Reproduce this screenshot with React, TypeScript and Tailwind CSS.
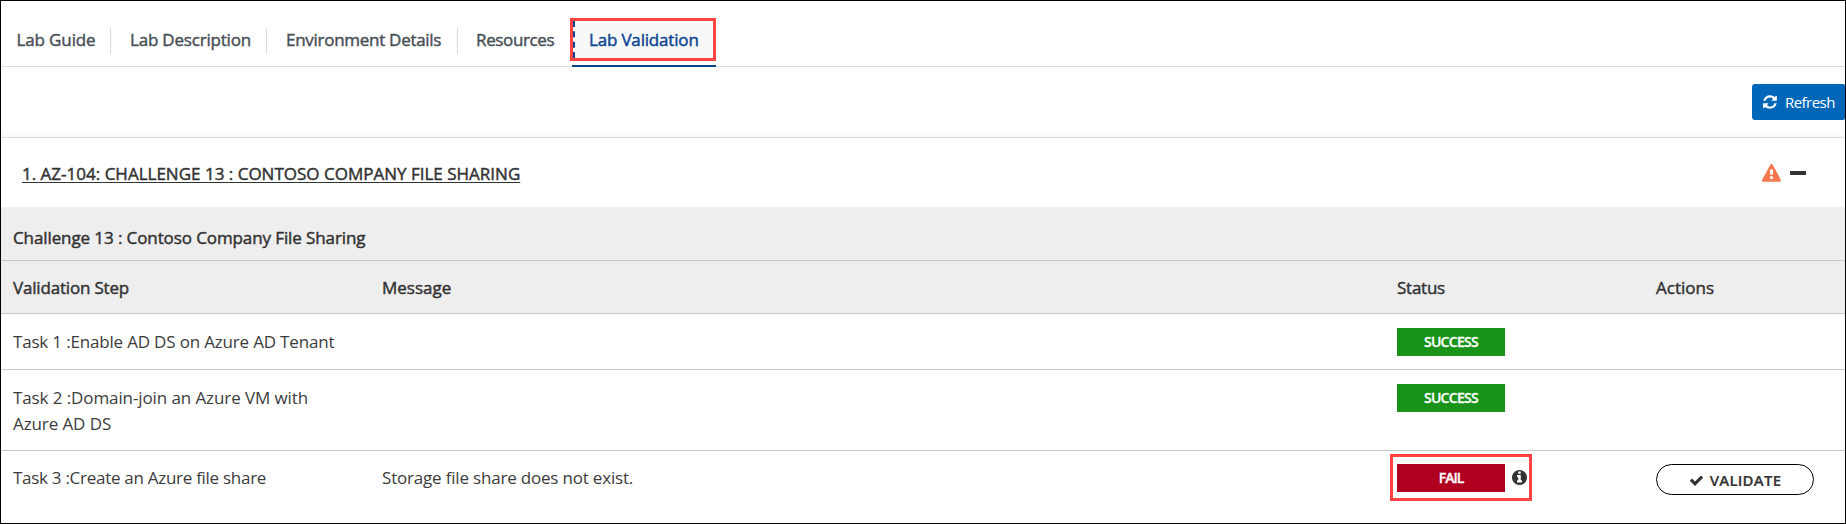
import type { ReactNode } from "react";

const heavy = "[-webkit-text-stroke:0.45px_currentColor]";

function Icon({ d, box, className }: { d: string; box: string; className: string }) {
  return (
    <svg viewBox={box} className={className} fill="currentColor" aria-hidden="true">
      <path d={d} />
    </svg>
  );
}

const REFRESH =
  "M1511 1056q0 5-1 7-64 268-268 434.5t-478 166.5q-146 0-282.5-55t-243.5-157l-129 129q-19 19-45 19t-45-19-19-45v-448q0-26 19-45t45-19h448q26 0 45 19t19 45-19 45l-137 137q71 66 161 102t187 36q134 0 250-65t186-179q11-17 53-117 8-23 30-23h192q13 0 22.5 9.5t9.5 22.5zm25-800v448q0 26-19 45t-45 19h-448q-26 0-45-19t-19-45 19-45l138-138q-148-137-349-137-134 0-250 65t-186 179q-11 17-53 117-8 23-30 23h-199q-13 0-22.5-9.5t-9.5-22.5v-7q65-268 270-434.5t480-166.5q146 0 284 55.5t245 156.5l130-129q19-19 45-19t45 19 19 45z";
const WARNING =
  "M1024 1375v-190q0-14-9.5-23.5t-22.5-9.5h-192q-13 0-22.5 9.5t-9.5 23.5v190q0 14 9.5 23.5t22.5 9.5h192q13 0 22.5-9.5t9.5-23.5zm-2-374l18-459q0-12-10-19-13-11-24-11h-220q-11 0-24 11-10 7-10 21l17 457q0 10 10 16.5t24 6.5h185q14 0 23.5-6.5t10.5-16.5zm-14-934l768 1408q35 63-2 126-17 29-46.5 46t-63.5 17h-1536q-34 0-63.5-17t-46.5-46q-37-63-2-126l768-1408q17-31 47-49t65-18 65 18 47 49z";
const INFO =
  "M1024 1376v-160q0-14-9-23t-23-9h-96v-512q0-14-9-23t-23-9h-320q-14 0-23 9t-9 23v160q0 14 9 23t23 9h96v320h-96q-14 0-23 9t-9 23v160q0 14 9 23t23 9h448q14 0 23-9t9-23zm-128-896v-160q0-14-9-23t-23-9h-192q-14 0-23 9t-9 23v160q0 14 9 23t23 9h192q14 0 23-9t9-23zm640 416q0 209-103 385.5t-279.5 279.5-385.5 103-385.5-103-279.5-279.5-103-385.5 103-385.5 279.5-279.5 385.5-103 385.5 103 279.5 279.5 103 385.5z";
const CHECK =
  "M1671 566q0 40-28 68l-724 724-136 136q-28 28-68 28t-68-28l-136-136-362-362q-28-28-28-68t28-68l136-136q28-28 68-28t68 28l294 295 656-657q28-28 68-28t68 28l136 136q28 28 28 68z";

const tabs = [
  { label: "Lab Guide", box: "w-[110px] pl-[15.5px]", tracking: "tracking-[-0.13px]" },
  { label: "Lab Description", box: "w-[156px] pl-[19px]", tracking: "tracking-[-0.2px]" },
  { label: "Environment Details", box: "w-[191px] pl-[19px]", tracking: "tracking-[-0.28px]" },
  { label: "Resources", box: "w-[114px] pl-[18px]", tracking: "tracking-[-0.36px]" },
];

function Row({ className, children }: { className: string; children: ReactNode }) {
  return (
    <div className={`grid grid-cols-[369px_1015px_259px_1fr] items-start pl-3 ${className}`}>{children}</div>
  );
}

function Badge({ ok }: { ok: boolean }) {
  return (
    <span
      className={`block h-7 w-[108px] text-center text-[14px] leading-[28px] font-semibold text-white [-webkit-text-stroke:0.3px_white] ${
        ok ? "bg-[#199319] tracking-[-0.7px]" : "bg-[#b00020] tracking-[-1px]"
      }`}
    >
      {ok ? "SUCCESS" : "FAIL"}
    </span>
  );
}

export default function App() {
  return (
    <div className="flex h-[524px] w-[1846px] flex-col overflow-hidden border border-black bg-white font-['Open_Sans',sans-serif] text-[17px] leading-[26px] text-[#333]">
      <nav className={`flex h-[66px] shrink-0 border-b border-[#dcdce4] text-[#495057] ${heavy}`}>
        {tabs.map((t, i) => (
          <div
            key={t.label}
            className={`mt-[27px] flex h-[26px] items-center ${t.box} ${t.tracking} ${
              i < 3 ? "border-r border-[#d9dbe2]" : ""
            }`}
          >
            <span className="-mt-0.5 whitespace-nowrap">{t.label}</span>
          </div>
        ))}
        <div className="relative h-[66px] w-[144px] border-b-2 border-[#0b4592] text-[#0b4592]">
          <div className="absolute top-[17px] -left-[2px] h-[43px] w-[146px] border-[3px] border-[#ff4343] bg-[#f8f8f8]">
            <div className="h-full border-l-2 border-dashed border-[#0b4592] pt-[6px] pl-[14px] tracking-[-0.18px] whitespace-nowrap">
              Lab Validation
            </div>
          </div>
        </div>
      </nav>

      <div className="flex h-[71px] shrink-0 justify-end border-b border-[#dcdde3] bg-[linear-gradient(to_top,#f9f9f9,#ffffff_9px)] pt-[17px]">
        <button className="flex h-9 w-[93px] items-center rounded-l-[3px] rounded-r-[2px] bg-[#0067b8] pl-[11px] text-[15px] tracking-[-0.55px] text-white">
          <Icon d={REFRESH} box="0 0 1536 1792" className="-mt-px h-[16px] w-[14px]" />
          <span className="ml-[8px]">Refresh</span>
        </button>
      </div>

      <div className="flex h-[69px] shrink-0 items-start justify-between pr-[39px] pl-[21px]">
        <span className={`mt-[23px] tracking-[0.005px] underline decoration-1 underline-offset-2 ${heavy}`}>
          1. AZ-104: CHALLENGE 13 : CONTOSO COMPANY FILE SHARING
        </span>
        <div className="mt-[26px] flex items-center gap-[9px]">
          <Icon d={WARNING} box="0 0 1792 1792" className="size-[19px] text-[#f4794e]" />
          <span className="-mt-0.5 h-1 w-4 bg-[#333]" />
        </div>
      </div>

      <div className={`h-[54px] shrink-0 border-b border-[#c8c8c8] bg-[#eee] pt-[18px] pl-3 tracking-[-0.1px] ${heavy}`}>
        Challenge 13 : Contoso Company File Sharing
      </div>
      <Row className={`h-[53px] shrink-0 border-b border-[#c8c8c8] bg-[#eee] pt-[14px] ${heavy}`}>
        <span className="tracking-[-0.18px]">Validation Step</span>
        <span>Message</span>
        <span className="tracking-[-0.25px]">Status</span>
        <span>Actions</span>
      </Row>
      <Row className="h-14 shrink-0 border-b border-[#c8c8c8] pt-[14px] text-[#3c3c3c]">
        <span className="pt-px tracking-[-0.18px]">Task 1 :Enable AD DS on Azure AD Tenant</span>
        <span />
        <Badge ok />
      </Row>
      <Row className="h-[81px] shrink-0 border-b border-[#c8c8c8] pt-[14px] text-[#3c3c3c]">
        <span className="pt-px tracking-[-0.1px]">
          Task 2 :Domain-join an Azure VM with
          <br />
          Azure AD DS
        </span>
        <span />
        <Badge ok />
      </Row>
      <Row className="h-[72px] shrink-0 pt-[13px]">
        <span className="pt-px tracking-[-0.28px] text-[#3c3c3c]">Task 3 :Create an Azure file share</span>
        <span className="pt-px tracking-[-0.19px] text-[#3c3c3c]">Storage file share does not exist.</span>
        <div className="relative flex">
          <Badge ok={false} />
          <Icon d={INFO} box="0 128 1536 1536" className="mt-[6px] ml-[7px] size-[15px]" />
          <div className="absolute -top-[10px] -left-[7px] h-[47px] w-[142px] border-[3px] border-[#ff4343]" />
        </div>
        <button className="flex h-[31px] w-[158px] items-center justify-center rounded-full border border-black text-[15px] font-semibold tracking-[0.25px]">
          <Icon d={CHECK} box="0 0 1792 1792" className="mt-0.5 mr-[6px] size-[15px]" />
          <span className="mt-px [-webkit-text-stroke:0.2px_currentColor]">VALIDATE</span>
        </button>
      </Row>
    </div>
  );
}
